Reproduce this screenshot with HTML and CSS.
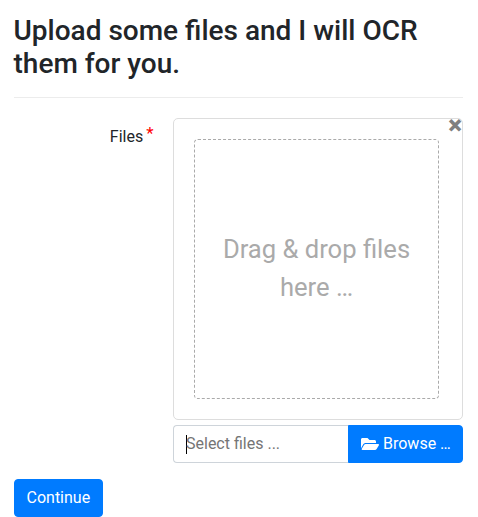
FILE: index.html
```html
<!DOCTYPE html>
<html lang="en">
<head>
<meta charset="utf-8">
<title>Upload files</title>
<link rel="stylesheet" href="styles.css">
</head>
<body>
<main class="page">
<h1 class="title">Upload some files and I will OCR them for you.</h1>
<hr class="rule">
<form class="form">
<div class="row">
<div class="label">Files<span class="required">*</span></div>
<div class="field">
<div class="preview">
<button type="button" class="close" aria-label="Close">×</button>
<div class="drop-zone">Drag &amp; drop files<br>here …</div>
</div>
<div class="input-group">
<div class="caption"><span class="caret"></span>Select files ...</div>
<button type="button" class="browse"><svg class="folder" viewBox="0 0 576 512" aria-hidden="true"><path fill="currentColor" d="M572.694 292.093L500.27 416.248A63.997 63.997 0 0 1 444.989 448H45.025c-18.523 0-30.064-20.093-20.731-36.093l72.424-124.155A64 64 0 0 1 152 256h399.964c18.523 0 30.064 20.093 20.73 36.093zM152 224h328v-48c0-26.51-21.49-48-48-48H272l-64-64H48C21.49 64 0 85.49 0 112v278.046l69.077-118.418C86.214 242.25 117.989 224 152 224z"/></svg>Browse …</button>
</div>
</div>
</div>
<button type="button" class="continue">Continue</button>
</form>
</main>
</body>
</html>
```
FILE: styles.css
```css
* {
  box-sizing: border-box;
}

body {
  margin: 0;
  background: #fff;
  color: #212529;
  font: 400 16px/24px Roboto, sans-serif;
}

.page {
  padding: 14px 15px 0 13.5px;
}

.title {
  margin: 0;
  font-size: 28px;
  font-weight: 500;
  line-height: 33px;
}

.rule {
  height: 1px;
  margin: 17px 0 20px;
  border: 0;
  background: #ececec;
}

.form {
  margin: 0;
}

.row {
  display: grid;
  grid-template-columns: 140px 290px;
  column-gap: 19.5px;
  margin-bottom: 16px;
}

.label {
  padding-top: 7px;
  text-align: right;
}

.required {
  display: inline-block;
  height: 20px;
  margin-left: 3px;
  color: #f00;
  font-size: 17px;
  line-height: 17px;
  vertical-align: top;
}

.preview {
  position: relative;
  height: 302px;
  margin-bottom: 5px;
  padding: 20px;
  border: 1px solid #ddd;
  border-radius: 5px;
}

.close {
  position: absolute;
  top: -6px;
  right: 0;
  padding: 0;
  border: 0;
  background: none;
  color: #7f7f7f;
  font: 900 26px/24px Roboto, sans-serif;
}

.drop-zone {
  display: flex;
  align-items: center;
  justify-content: center;
  width: 245px;
  height: 260px;
  padding-bottom: 2px;
  border: 1px dashed #aaa;
  border-radius: 4px;
  color: #aaa;
  font-size: 25.6px;
  line-height: 38.4px;
  text-align: center;
}

.input-group {
  display: flex;
  height: 38px;
}

.caption {
  display: flex;
  align-items: center;
  width: 175px;
  padding-left: 12px;
  border: 1px solid #ced4da;
  border-right: 0;
  border-radius: 4px 0 0 4px;
  color: #757575;
}

.caret {
  width: 1px;
  height: 19px;
  margin-right: -1px;
  background: #000;
}

.browse,
.continue {
  height: 38px;
  padding: 6px 12px;
  border: 1px solid #007bff;
  border-radius: 4px;
  background: #007bff;
  color: #fff;
  font: inherit;
  white-space: nowrap;
}

.browse {
  display: flex;
  align-items: center;
  width: 115px;
  border-radius: 0 4px 4px 0;
}

.folder {
  flex: none;
  width: 18px;
  height: 16px;
  margin-right: 4px;
}

.continue {
  width: 89px;
}
```
